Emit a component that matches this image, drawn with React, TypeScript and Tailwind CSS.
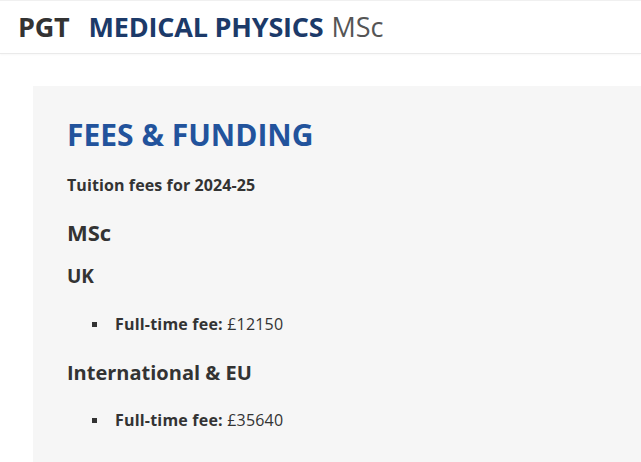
export default function App() {
  return (
    <div className="min-h-[462px] bg-white font-['Open_Sans',sans-serif] text-[#333]">
      <header className="h-[54px] border-t border-b border-t-[#f0f0f0] border-b-[#eaeaea] flex items-center pl-[18px] shadow-[0_1px_2px_rgba(0,0,0,0.03)]">
        <span className="text-[27px] font-bold text-[#333] mr-[19px] tracking-[-0.2px]">PGT</span>
        <span className="text-[27px] font-bold text-[#1c3a69] mr-[8px] tracking-[-0.2px]">MEDICAL PHYSICS</span>
        <span className="text-[27px] text-[#555]">MSc</span>
      </header>
      <main className="pt-[32px] pl-[33px]">
        <section className="bg-[#f6f6f6] min-h-[376px] pl-[34px] pt-[30px] pb-8">
          <h2 className="text-[30px] font-bold text-[#22539c] leading-tight">FEES &amp; FUNDING</h2>
          <p className="mt-[19px] text-[16px] font-bold tracking-[0.1px]">Tuition fees for 2024-25</p>
          <h3 className="mt-[19px] text-[22px] font-bold">MSc</h3>
          <h4 className="mt-[13px] text-[19px] font-bold">UK</h4>
          <ul className="mt-[22px] pl-[25px]">
            <li className="flex items-center text-[16px] tracking-[0.2px]">
              <span className="w-[5px] h-[5px] bg-[#333] mr-[18px]" />
              <span><b>Full-time fee:</b> £12150</span>
            </li>
          </ul>
          <h4 className="mt-[22px] text-[20px] font-bold">International &amp; EU</h4>
          <ul className="mt-[20px] pl-[25px]">
            <li className="flex items-center text-[16px] tracking-[0.2px]">
              <span className="w-[5px] h-[5px] bg-[#333] mr-[18px]" />
              <span><b>Full-time fee:</b> £35640</span>
            </li>
          </ul>
        </section>
      </main>
    </div>
  );
}
